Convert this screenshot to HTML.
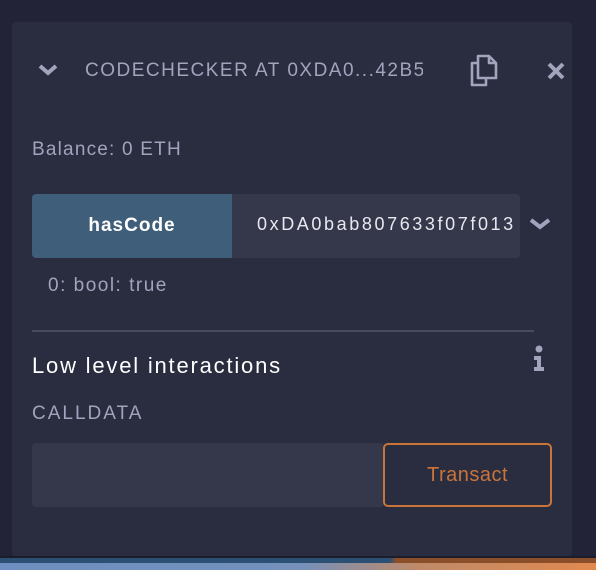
<!DOCTYPE html>
<html><head><style>
*{margin:0;padding:0;box-sizing:border-box}
body{width:596px;height:570px;background:#222336;position:relative;overflow:hidden;font-family:"Liberation Sans",sans-serif}
.panel{position:absolute;left:12px;top:22px;width:560px;height:534px;background:#2a2c3f;border-radius:3px}
.abs{position:absolute}
.t{color:#a2a3bd;font-size:19px;white-space:nowrap}
</style></head><body>
<div class="panel"></div>
<svg class="abs" style="left:37px;top:63px" width="22" height="14" viewBox="0 0 22 14"><path d="M3 3 L11 10 L19 3" stroke="#a2a3bd" stroke-width="4" fill="none"/></svg>
<div class="abs t" style="left:85px;top:60px;width:338px;overflow:hidden;font-size:19px;letter-spacing:1.5px">CODECHECKER AT 0XDA0...42B5</div>
<svg class="abs" style="left:468px;top:54px" width="31" height="33" viewBox="0 0 31 33"><path d="M10 2 H21 L28 9 V24 H10 Z M21 2 V9 H28" stroke="#a2a3bd" stroke-width="2.6" fill="none" stroke-linejoin="round"/><path d="M10 9 H4 V31 H18 V24" stroke="#a2a3bd" stroke-width="2.6" fill="none" stroke-linejoin="round"/></svg>
<svg class="abs" style="left:546px;top:61px" width="20" height="20" viewBox="0 0 20 20"><path d="M3 3 L17 17 M17 3 L3 17" stroke="#a2a3bd" stroke-width="4"/></svg>
<div class="abs t" style="left:32px;top:139px;font-size:19px;letter-spacing:1.2px">Balance: 0 ETH</div>
<div class="abs" style="left:32px;top:194px;width:488px;height:64px;background:#35374a;border-radius:4px"></div>
<div class="abs" style="left:32px;top:194px;width:200px;height:64px;background:#3f5e7a;border-radius:4px 0 0 4px;color:#fff;font-weight:bold;font-size:19px;letter-spacing:1px;text-align:center;line-height:64px">hasCode</div>
<div class="abs" style="left:257px;top:214px;width:263px;overflow:hidden;color:#e8e8f0;font-size:18px;letter-spacing:2.6px;white-space:nowrap">0xDA0bab807633f07f013</div>
<svg class="abs" style="left:528px;top:216px" width="24" height="16" viewBox="0 0 24 16"><path d="M3 4 L12 11 L21 4" stroke="#a2a3bd" stroke-width="4" fill="none"/></svg>
<div class="abs t" style="left:48px;top:275px;font-size:19px;letter-spacing:1.5px">0: bool: true</div>
<div class="abs" style="left:32px;top:330px;width:502px;height:2px;background:#474a5e"></div>
<div class="abs" style="left:32px;top:353px;color:#fff;font-size:22px;letter-spacing:1.8px;white-space:nowrap">Low level interactions</div>
<svg class="abs" style="left:532px;top:345px" width="14" height="27" viewBox="0 0 14 27"><circle cx="7" cy="4" r="3.5" fill="#a2a3bd"/><path d="M2 11 H9 V22 H12 V26 H2 V22 H5 V15 H2 Z" fill="#a2a3bd"/></svg>
<div class="abs t" style="left:32px;top:403px;font-size:19px;letter-spacing:2px">CALLDATA</div>
<div class="abs" style="left:32px;top:443px;width:352px;height:64px;background:#35374a;border-radius:4px"></div>
<div class="abs" style="left:383px;top:443px;width:169px;height:64px;border:2px solid #c97539;border-radius:5px;color:#c97539;font-size:20px;letter-spacing:0.5px;text-align:center;line-height:60px">Transact</div>
<div class="abs" style="left:0;top:556px;width:596px;height:2px;background:#1b1d2c"></div>
<div class="abs" style="left:0;top:558px;width:596px;height:5px;background:linear-gradient(90deg,#2c4f74 0,#2c4f74 390px,#8a4f28 396px,#8a4f28 100%)"></div>
<div class="abs" style="left:0;top:563px;width:596px;height:7px;background:linear-gradient(90deg,#6e8fbf 0,#7490bb 300px,#c08a68 420px,#e0894f 100%)"></div>
</body></html>
